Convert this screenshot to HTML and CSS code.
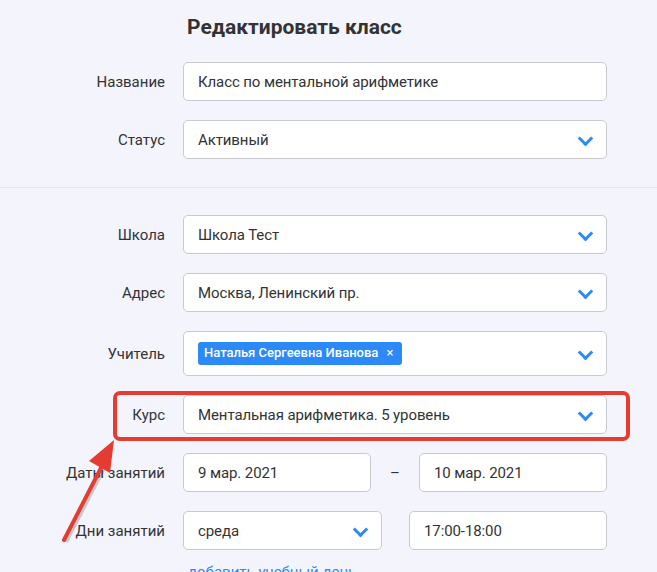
FILE: index.html
```html
<!DOCTYPE html>
<html>
<head>
    <title>Редактировать класс</title>
    <link rel="stylesheet" href="styles.css">
</head>
<body>
    <div class="page">
        <h1 class="title">Редактировать класс</h1>

        <div class="section">
            <div class="row">
                <label class="label">Название</label>
                <div class="field">Класс по ментальной арифметике</div>
            </div>
            <div class="row">
                <label class="label">Статус</label>
                <div class="field select">Активный<span class="chevron"></span></div>
            </div>
        </div>

        <hr class="divider">

        <div class="section">
            <div class="row">
                <label class="label">Школа</label>
                <div class="field select">Школа Тест<span class="chevron"></span></div>
            </div>
            <div class="row">
                <label class="label">Адрес</label>
                <div class="field select">Москва, Ленинский пр.<span class="chevron"></span></div>
            </div>
            <div class="row">
                <label class="label">Учитель</label>
                <div class="field select tall">
                    <span class="tag">Наталья Сергеевна Иванова <span class="tag-x">×</span></span>
                    <span class="chevron"></span>
                </div>
            </div>
            <div class="row">
                <label class="label">Курс</label>
                <div class="field select">Ментальная арифметика. 5 уровень<span class="chevron"></span></div>
            </div>
            <div class="row">
                <label class="label">Даты занятий</label>
                <div class="pair dates">
                    <div class="field">9 мар. 2021</div>
                    <span class="dash">–</span>
                    <div class="field">10 мар. 2021</div>
                </div>
            </div>
            <div class="row">
                <label class="label">Дни занятий</label>
                <div class="pair days">
                    <div class="field select">среда<span class="chevron"></span></div>
                    <div class="field">17:00-18:00</div>
                </div>
            </div>
            <div class="add-link">добавить учебный день</div>
        </div>

        <!-- annotation -->
        <div class="highlight"></div>
        <svg class="arrow" width="70" height="110" viewBox="0 0 70 110">
            <line x1="8" y1="104" x2="46" y2="30" stroke="rgba(0,0,0,0.18)" stroke-width="4" transform="translate(2,2)"/>
            <line x1="8" y1="104" x2="46" y2="30" stroke="#e53c32" stroke-width="4" stroke-linecap="round"/>
            <polygon points="58,4 33,25 54,37" fill="#e53c32"/>
        </svg>
    </div>
</body>
</html>
```
FILE: styles.css
```css
body {
    margin: 0;
    background-color: #f4f4fd;
    font-family: Roboto, "Noto Sans", sans-serif;
    color: #333;
    overflow: hidden;
}

.page {
    position: relative;
    height: 572px;
}

.title {
    margin: 0;
    padding: 15px 0 0 187px;
    font-size: 21px;
    font-weight: bold;
    color: #333;
    line-height: 24px;
}

.section {
    padding: 0 50px 0 0;
}

.section:first-of-type {
    padding-top: 23px;
}

.row {
    display: grid;
    grid-template-columns: 165px 424px;
    column-gap: 18px;
    align-items: center;
    margin-bottom: 19px;
}

.label {
    text-align: right;
    font-size: 15px;
    color: #333;
}

.field {
    position: relative;
    box-sizing: border-box;
    height: 39px;
    padding: 0 14px;
    display: flex;
    align-items: center;
    background-color: white;
    border: 1px solid #c9c9d2;
    border-radius: 5px;
    font-size: 15px;
    letter-spacing: -0.1px;
    color: #333;
}

.field.tall {
    height: 45px;
}

.chevron {
    position: absolute;
    right: 15px;
    top: 50%;
    width: 8px;
    height: 8px;
    margin-top: -7px;
    border-right: 3px solid #2b8af7;
    border-bottom: 3px solid #2b8af7;
    transform: rotate(45deg);
}

.tag {
    background-color: #2b8af7;
    color: white;
    font-size: 13px;
    font-weight: 500;
    letter-spacing: 0;
    padding: 3px 8px 4px 6px;
    border-radius: 3px;
    line-height: 16px;
}

.tag-x {
    margin-left: 5px;
    font-weight: normal;
}

.divider {
    border: none;
    border-top: 1px solid #e5e5f0;
    margin: 28px 0 27px 0;
}

.pair {
    display: flex;
    align-items: center;
}

.dates .field {
    width: 188px;
}

.dash {
    flex: 1;
    text-align: center;
    font-size: 15px;
}

.days {
    justify-content: space-between;
}

.days .field:first-child {
    width: 199px;
}

.days .field:last-child {
    width: 198px;
}

.add-link {
    padding-left: 188px;
    margin-top: -6px;
    font-size: 15px;
    color: #2b8af7;
}

.highlight {
    position: absolute;
    left: 113px;
    top: 391px;
    width: 509px;
    height: 42px;
    border: 4px solid #e53c32;
    border-radius: 7px;
}

.arrow {
    position: absolute;
    left: 56px;
    top: 436px;
}
```
